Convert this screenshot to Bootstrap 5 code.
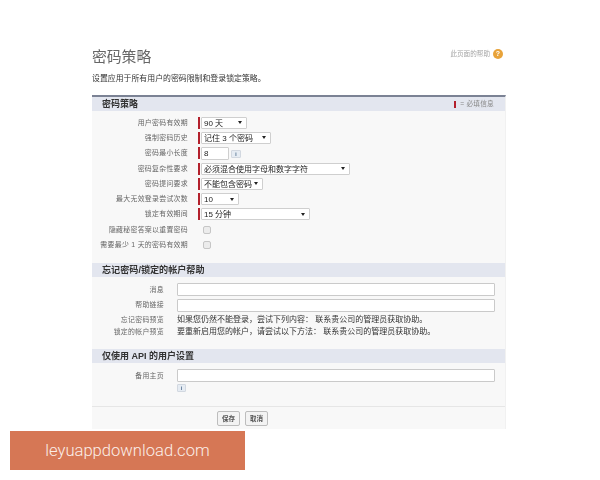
<!doctype html>
<html lang="zh">
<head>
<meta charset="utf-8">
<link href="https://cdn.jsdelivr.net/npm/bootstrap@5.3.0/dist/css/bootstrap.min.css" rel="stylesheet">
<style>
html,body{height:480px;overflow:hidden;background:#fff}
body{font-family:"Liberation Sans","Noto Sans CJK SC",sans-serif;color:#222;font-size:8px;position:relative}
.page-wrap{padding:46px 94px 0 92px;filter:blur(.4px)}
.page-head{height:22px}
.page-title{font-size:14.8px;line-height:20px;color:#666;font-weight:400;margin:0}
.help-link{font-size:6.6px;color:#a5a5a5;line-height:12px;margin-right:3px;margin-bottom:6px;gap:3px}
.help-dot{width:10px;height:10px;border-radius:50%;background:#e8a33a;color:#fff;font-size:7px;line-height:10px;text-align:center;font-weight:700}
.intro{font-size:7.9px;line-height:10px;margin:6px 0 0;height:21px;color:#333}
.panel{background:#f8f8f8;border-top:2px solid #7b8294;height:334px;width:414px;border-right:1px solid #f1f1f1}
.sec-head{height:14px;background:#e3e6ef;padding:0 10px;font-size:9px;line-height:14px;font-weight:700;color:#333}
.sec-wide{font-size:9.1px}
.req-note{font-size:6.7px;font-weight:400;color:#888;gap:4px;margin-right:1px;letter-spacing:.2px}
.req-bar{width:2px;height:7px;background:#b3202c;display:block}
.form-a{padding-top:4px;height:152px}
.frow{height:15.3px}
.flabel{width:96px;text-align:right;font-size:6.9px;color:#666;line-height:12px;letter-spacing:.3px;flex:none}
.flabel-b{width:72px}
.req{width:2px;height:12px;background:#b3202c;margin-left:10px;margin-right:1px;flex:none}
.nreq{width:13px;flex:none}
select.form-select.tiny,.tiny-input{height:12px;min-height:0;padding:1px 2px 0;font-size:8px;line-height:10px;border:1px solid #cfcfcf;border-radius:1px;color:#222;background-color:#fff;box-shadow:none}
.tiny-input{height:13px}
select.form-select.tiny{background-image:url("data:image/svg+xml,%3Csvg xmlns='http://www.w3.org/2000/svg' width='4' height='3'%3E%3Cpath d='M0 0h4L2 3z' fill='%23222'/%3E%3C/svg%3E");background-size:4px 3px;background-position:right 4px center}
.w46{width:46px}.w70{width:70px}.w28{width:28px}.w149{width:149px}.w62{width:62px}.w38{width:38px}.w109{width:109px}
.info-btn{width:10px;height:8px;margin-left:2px;margin-top:1px;background:#e6ecf3;border:1px solid #d2d8e0;border-radius:1px;font-size:5px;line-height:6px;text-align:center;color:#3f5f80;font-weight:700;flex:none}
.fake-check{width:8px;height:8px;border:1px solid #c6c6c6;border-radius:2px;background:#ececec;margin-left:2px}
.form-b{padding-top:5px;height:72px}
.frow-b{height:15.5px}
.gap-none{width:13px;flex:none}
.wide{width:318px;height:13px;background:#fff;border:1px solid #cacaca;border-radius:1px;padding:0}
.ptext{font-size:8px;color:#333;line-height:12px;white-space:nowrap}
.frow-c{height:13px}
.frow-d{height:12px}
.form-c{padding-top:6px;height:43px}
.i-row{margin-left:85px;margin-top:2px}
.i-row .info-btn{margin:0;width:9px}
.foot{border-top:1px solid #e6e6e6;height:23px;padding:4px 0 0 125px;gap:5px}
.fbtn{height:15px;width:23px;padding:0;font-size:6.5px;line-height:13px;color:#555;background:#f3f3f3;border:1px solid #bdbdbd;border-radius:2px;font-weight:700}
.mark-banner{position:absolute;left:10px;top:431px;width:235px;height:39px;background:#d67755;color:#fbeee8;font-family:Roboto,"Liberation Sans",sans-serif;font-weight:300;font-size:16.6px;line-height:39px;text-align:center}
</style>
</head>
<body>
<div class="page-wrap">
  <div class="page-head d-flex justify-content-between align-items-center">
    <h1 class="page-title">密码策略</h1>
    <div class="help-link d-flex align-items-center"><span>此页面的帮助</span><span class="help-dot">?</span></div>
  </div>
  <p class="intro">设置应用于所有用户的密码限制和登录锁定策略。</p>
  <div class="panel">
    <div class="sec-head d-flex justify-content-between align-items-center"><span>密码策略</span><span class="req-note d-flex align-items-center"><i class="req-bar"></i><span>= 必填信息</span></span></div>
    <div class="form-a">
      <div class="frow d-flex align-items-center"><div class="flabel">用户密码有效期</div><i class="req"></i><select class="form-select tiny w46"><option>90 天</option></select></div>
      <div class="frow d-flex align-items-center"><div class="flabel">强制密码历史</div><i class="req"></i><select class="form-select tiny w70"><option>记住 3 个密码</option></select></div>
      <div class="frow d-flex align-items-center"><div class="flabel">密码最小长度</div><i class="req"></i><input class="tiny-input w28" value="8"><span class="info-btn">i</span></div>
      <div class="frow d-flex align-items-center"><div class="flabel">密码复杂性要求</div><i class="req"></i><select class="form-select tiny w149"><option>必须混合使用字母和数字字符</option></select></div>
      <div class="frow d-flex align-items-center"><div class="flabel">密码提问要求</div><i class="req"></i><select class="form-select tiny w62"><option>不能包含密码</option></select></div>
      <div class="frow d-flex align-items-center"><div class="flabel">最大无效登录尝试次数</div><i class="req"></i><select class="form-select tiny w38"><option>10</option></select></div>
      <div class="frow d-flex align-items-center"><div class="flabel">锁定有效期间</div><i class="req"></i><select class="form-select tiny w109"><option>15 分钟</option></select></div>
      <div class="frow d-flex align-items-center"><div class="flabel">隐藏秘密答案以重置密码</div><span class="nreq"></span><span class="fake-check"></span></div>
      <div class="frow d-flex align-items-center"><div class="flabel">需要最少 1 天的密码有效期</div><span class="nreq"></span><span class="fake-check"></span></div>
    </div>
    <div class="sec-head sec-wide">忘记密码/锁定的帐户帮助</div>
    <div class="form-b">
      <div class="frow-b d-flex align-items-center"><div class="flabel flabel-b">消息</div><span class="gap-none"></span><input class="wide"></div>
      <div class="frow-b d-flex align-items-center"><div class="flabel flabel-b">帮助链接</div><span class="gap-none"></span><input class="wide"></div>
      <div class="frow-c d-flex align-items-center"><div class="flabel flabel-b">忘记密码预览</div><span class="gap-none"></span><span class="ptext">如果您仍然不能登录，尝试下列内容： 联系贵公司的管理员获取协助。</span></div>
      <div class="frow-d d-flex align-items-center"><div class="flabel flabel-b">锁定的帐户预览</div><span class="gap-none"></span><span class="ptext">要重新启用您的帐户，请尝试以下方法： 联系贵公司的管理员获取协助。</span></div>
    </div>
    <div class="sec-head">仅使用 API 的用户设置</div>
    <div class="form-c">
      <div class="frow-c d-flex align-items-center"><div class="flabel flabel-b">备用主页</div><span class="gap-none"></span><input class="wide"></div>
      <div class="i-row"><span class="info-btn d-block">i</span></div>
    </div>
    <div class="foot d-flex align-items-start"><button class="btn fbtn">保存</button><button class="btn fbtn">取消</button></div>
  </div>
</div>
<div class="mark-banner">leyuappdownload.com</div>
</body>
</html>
